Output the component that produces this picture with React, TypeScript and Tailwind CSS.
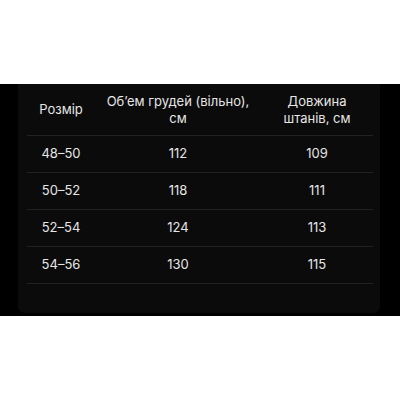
const rows = [
  { size: "48–50", chest: "112", pants: "109" },
  { size: "50–52", chest: "118", pants: "111" },
  { size: "52–54", chest: "124", pants: "113" },
  { size: "54–56", chest: "130", pants: "115" },
];

export default function App() {
  return (
    <div
      className="flex h-[400px] w-[400px] flex-col bg-white text-[13px] text-[#e6e6e6]"
      style={{ fontFamily: "Inter, 'Noto Sans', sans-serif" }}
    >
      <div className="mt-[84px] h-[232px] bg-black pl-[18px] pr-[20px] pb-[3px]">
        <div className="h-full rounded-b-[7px] bg-[#0b0b0b] pl-[9px] pr-[7px]">
          <div className="grid h-[52px] grid-cols-[68px_166px_112px] items-center border-b border-[#222] leading-[17px]">
            <div className="text-center">Розмір</div>
            <div className="text-center">
              Об’ем грудей (вільно),
              <br />
              см
            </div>
            <div className="text-center">
              Довжина
              <br />
              штанів, см
            </div>
          </div>
          {rows.map((row) => (
            <div
              key={row.size}
              className="grid h-[37px] grid-cols-[68px_166px_112px] items-center border-b border-[#222]"
            >
              <div className="text-center">{row.size}</div>
              <div className="text-center">{row.chest}</div>
              <div className="text-center">{row.pants}</div>
            </div>
          ))}
        </div>
      </div>
    </div>
  );
}
